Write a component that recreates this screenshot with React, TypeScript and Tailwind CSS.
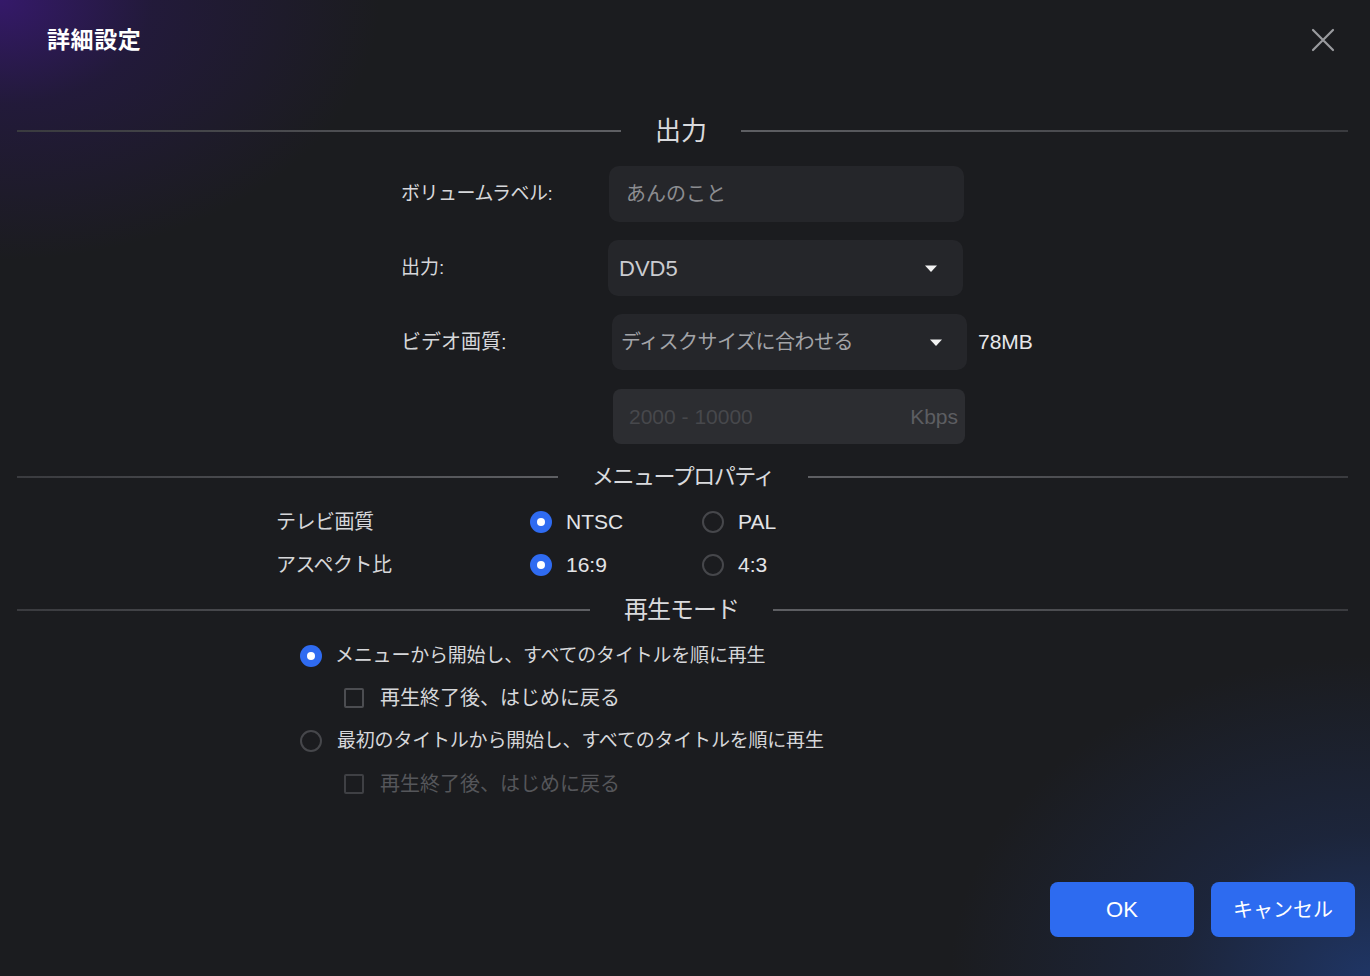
import React from "react";

// 詳細設定ダイアログ — 出力 / メニュープロパティ / 再生モード

function SectionHead({ title, left, size }: { title: string; left: string; size: string }) {
  return (
    <div className="flex h-[30px] items-center pl-[17px] pr-[22px]">
      <div className={`h-[2px] ${left} bg-gradient-to-r from-[#3a3b3f] to-[#5e5f63]`} />
      <div className={`px-[34px] leading-none text-[#d9dadd] ${size}`}>{title}</div>
      <div className="h-[2px] flex-1 bg-gradient-to-r from-[#5e5f63] to-[#3a3b3f]" />
    </div>
  );
}

function Caret() {
  return (
    <svg width="14" height="9" viewBox="0 0 14 9" className="shrink-0">
      <path d="M1 1.5h12L7 8z" fill="#f2f2f2" />
    </svg>
  );
}

function Radio({ on }: { on?: boolean }) {
  return on ? (
    <span className="flex h-[22px] w-[22px] shrink-0 items-center justify-center rounded-full bg-[#2f6bf1]">
      <span className="h-[8px] w-[8px] rounded-full bg-white" />
    </span>
  ) : (
    <span className="h-[22px] w-[22px] shrink-0 rounded-full border-2 border-[#46474b]" />
  );
}

function Check({ dim }: { dim?: boolean }) {
  return (
    <span
      className={`h-[20px] w-[20px] shrink-0 rounded-[2px] border-2 ${dim ? "border-[#3f4044]" : "border-[#4c4d51]"}`}
    />
  );
}

export default function App() {
  return (
    <div className="relative h-[976px] w-[1370px] overflow-hidden bg-[#1b1c1f] bg-[radial-gradient(ellipse_380px_260px_at_0%_0%,#35196a_0%,rgba(40,24,80,0.55)_40%,transparent_100%),radial-gradient(ellipse_420px_320px_at_100%_100%,#1f3564_0%,rgba(30,48,92,0.45)_45%,transparent_100%)] font-['Liberation_Sans','Noto_Sans_CJK_JP',sans-serif] text-[#d6d7da]">
      {/* header */}
      <div className="flex h-[80px] items-center justify-between pl-[47px] pr-[35px]">
        <div className="text-[23px] font-bold tracking-wide text-white">詳細設定</div>
        <svg width="24" height="24" viewBox="0 0 24 24">
          <path d="M2 2l20 20M22 2L2 22" stroke="#9a9b9f" strokeWidth="2.2" strokeLinecap="round" />
        </svg>
      </div>

      <div className="mt-[36px]">
        <SectionHead title="出力" left="w-[604px]" size="text-[26px]" />
      </div>

      {/* 出力 */}
      <div className="mt-[20px] flex h-[56px] items-center">
        <div className="w-[609px] pl-[401px] text-[19px] tracking-[-0.5px]">ボリュームラベル:</div>
        <div className="flex h-[56px] w-[355px] items-center rounded-[10px] bg-[#25262a] pl-[17px] text-[20px] text-[#8c8d91]">
          あんのこと
        </div>
      </div>

      <div className="mt-[18px] flex h-[56px] items-center">
        <div className="w-[608px] pl-[401px] text-[19px]">出力:</div>
        <div className="flex h-[56px] w-[355px] items-center justify-between rounded-[10px] bg-[#25262a] pl-[11px] pr-[25px] text-[22px] text-[#cbccd0]">
          DVD5
          <Caret />
        </div>
      </div>

      <div className="mt-[18px] flex h-[56px] items-center">
        <div className="w-[612px] pl-[401px] text-[20px]">ビデオ画質:</div>
        <div className="flex h-[56px] w-[355px] items-center justify-between rounded-[10px] bg-[#25262a] pl-[9px] pr-[24px] text-[20px] tracking-[-0.5px] text-[#a3a4a8]">
          ディスクサイズに合わせる
          <Caret />
        </div>
        <div className="ml-[11px] text-[21px] text-[#e6e7ea]">78MB</div>
      </div>

      <div className="mt-[19px] flex h-[55px] items-center">
        <div className="w-[613px]" />
        <div className="flex h-[55px] w-[352px] items-center justify-between rounded-[8px] bg-[#2c2d31] pl-[16px] pr-[7px] text-[21px]">
          <span className="text-[#47484c]">2000 - 10000</span>
          <span className="text-[#5d5e62]">Kbps</span>
        </div>
      </div>

      <div className="mt-[18px]">
        <SectionHead title="メニュープロパティ" left="w-[541px]" size="text-[22px] tracking-[-1.5px]" />
      </div>

      {/* メニュープロパティ */}
      {[
        { label: "テレビ画質", a: "NTSC", b: "PAL" },
        { label: "アスペクト比", a: "16:9", b: "4:3" },
      ].map((r, i) => (
        <div key={r.label} className={`flex h-[36px] items-center ${i === 0 ? "mt-[12px]" : "mt-[7px]"}`}>
          <div className="w-[530px] pl-[276px] text-[20px] tracking-[-0.5px]">{r.label}</div>
          <div className="flex w-[172px] items-center gap-[14px]">
            <Radio on />
            <span className="text-[21px] text-[#e3e4e7]">{r.a}</span>
          </div>
          <div className="flex items-center gap-[14px]">
            <Radio />
            <span className="text-[21px] text-[#e3e4e7]">{r.b}</span>
          </div>
        </div>
      ))}

      <div className="mt-[12px]">
        <SectionHead title="再生モード" left="w-[573px]" size="text-[24px] tracking-[-1px]" />
      </div>

      {/* 再生モード */}
      <div className="mt-[13px] flex h-[36px] items-center gap-[13px] pl-[300px] text-[19px] tracking-[-0.2px]">
        <Radio on />
        <span>メニューから開始し、すべてのタイトルを順に再生</span>
      </div>
      <div className="mt-[6px] flex h-[36px] items-center gap-[16px] pl-[344px] text-[20px]">
        <Check />
        <span>再生終了後、はじめに戻る</span>
      </div>
      <div className="mt-[7px] flex h-[36px] items-center gap-[15px] pl-[300px] text-[19px] tracking-[-0.2px]">
        <Radio />
        <span>最初のタイトルから開始し、すべてのタイトルを順に再生</span>
      </div>
      <div className="mt-[7px] flex h-[36px] items-center gap-[16px] pl-[344px] text-[20px] text-[#55565a]">
        <Check dim />
        <span>再生終了後、はじめに戻る</span>
      </div>

      {/* buttons */}
      <div className="mt-[80px] flex justify-end gap-[17px] pr-[15px]">
        <button className="flex h-[55px] w-[144px] items-center justify-center rounded-[8px] bg-[#2d6bf0] text-[22px] text-white">
          OK
        </button>
        <button className="flex h-[55px] w-[144px] items-center justify-center rounded-[8px] bg-[#2d6bf0] text-[20px] text-white">
          キャンセル
        </button>
      </div>
    </div>
  );
}
